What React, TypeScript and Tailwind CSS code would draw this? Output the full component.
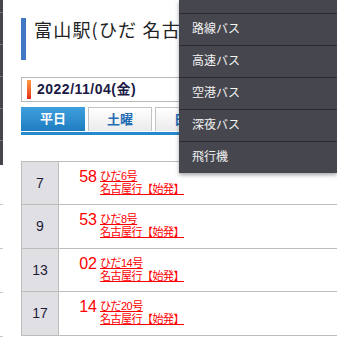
const menuItems = ["路線バス", "高速バス", "空港バス", "深夜バス"];

const rows = [
  { hour: "7", min: "58", train: "ひだ6号", h: "h-[43px]" },
  { hour: "9", min: "53", train: "ひだ8号", h: "h-[44px]" },
  { hour: "13", min: "02", train: "ひだ14号", h: "h-[43px]" },
  { hour: "17", min: "14", train: "ひだ20号", h: "h-[44px]" },
];

export default function App() {
  return (
    <div className="relative w-[337px] h-[357px] overflow-hidden bg-white font-['Liberation_Sans','Noto_Sans_CJK_JP',sans-serif]">
      <div className="flex">
        {/* edge of the side menu behind */}
        <div className="w-[3px] shrink-0 flex flex-col">
          <div className="bg-[#45454c]">
            <div className="h-[13px] border-b border-[#74747a]" />
            {menuItems.map((m) => (
              <div key={m} className="h-[32px] border-b border-[#74747a]" />
            ))}
            <div className="h-[24px]" />
          </div>
          <div className="h-[40px] border-b border-[#c8c8c8]" />
          <div className="h-[44px] border-b border-[#c8c8c8]" />
          <div className="h-[44px] border-b border-[#c8c8c8]" />
          <div className="h-[44px] border-b border-[#c8c8c8]" />
        </div>

        <div className="w-[340px] shrink-0 pl-[18px] pt-[18px]">
          <h1 className="h-[42px] border-l-[5px] border-[#4178c6] pl-[8px] text-[18px] leading-[22px] tracking-[1.2px] text-[#222] whitespace-nowrap font-['Noto_Sans_CJK_JP',sans-serif]">
            富山駅(ひだ 名古屋方面)
          </h1>

          <div className="mt-[17px] h-[25px] border border-[#b8b8b8] flex items-center pl-[5px]">
            <div className="w-[4px] h-[19px] bg-linear-to-b from-[#ff9a40] to-[#e2281a]" />
            <span className="ml-[6px] text-[14px] font-bold tracking-[0.5px] text-[#1a1a44]">2022/11/04(金)</span>
          </div>

          <div className="mt-[5px] flex gap-[3px]">
            <div className="w-[64px] h-[24px] flex items-center justify-center bg-linear-to-b from-[#3fa0dd] to-[#1d7dc0] text-white text-[13px] font-bold">
              平日
            </div>
            <div className="w-[64px] h-[24px] flex items-center justify-center border border-b-0 border-[#c4c4c4] bg-linear-to-b from-white to-[#ebebeb] text-[#1f6db3] text-[13px] font-bold">
              土曜
            </div>
            <div className="w-[64px] h-[24px] flex items-center justify-center border border-b-0 border-[#c4c4c4] bg-linear-to-b from-white to-[#ebebeb] text-[#1f6db3] text-[13px] font-bold">
              日祝
            </div>
          </div>
          <div className="mt-[1px] h-[3px] bg-[#2589cb]" />

          <div className="mt-[26px] border-l border-t border-[#bdbdbd]">
            {rows.map((r) => (
              <div key={r.hour} className={`flex border-b border-[#bdbdbd] ${r.h}`}>
                <div className="w-[37px] shrink-0 border-r border-[#bdbdbd] bg-[#dfdfe4] flex items-center justify-center text-[14px] text-[#1c1c3a]">
                  {r.hour}
                </div>
                <div className="flex items-start pt-[6px] pl-[19px] text-[#ff0000]">
                  <span className="w-[19px] text-right text-[16px] leading-[18px]">{r.min}</span>
                  <div className="ml-[3px] mt-[2px] text-[11px] leading-[13px] tracking-[-0.5px]">
                    <div className="underline underline-offset-[1px]">{r.train}</div>
                    <div className="underline underline-offset-[1px]">名古屋行【始発】</div>
                  </div>
                </div>
              </div>
            ))}
          </div>
        </div>
      </div>

      {/* dropdown menu over the page */}
      <div className="absolute top-0 left-[179px] w-[158px] bg-[#46464e] shadow-[0_2px_4px_rgba(0,0,0,0.35)] text-[12px] text-[#f2f2f2] font-['Noto_Sans_CJK_JP',sans-serif]">
        <div className="h-[14px] border-b border-[#2c2c31]" />
        {menuItems.map((m) => (
          <div key={m} className="h-[32px] border-b border-[#2c2c31] flex items-center pl-[13px] pb-[3px]">
            {m}
          </div>
        ))}
        <div className="h-[31px] flex items-center pl-[13px] pb-[3px]">飛行機</div>
      </div>
    </div>
  );
}
